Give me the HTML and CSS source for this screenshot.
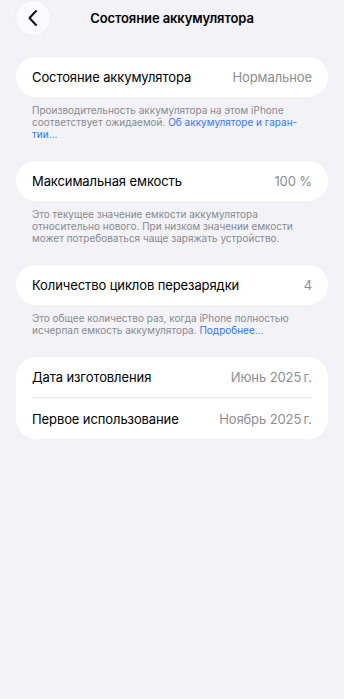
FILE: index.html
```html
<!DOCTYPE html>
<html lang="ru">
<head>
<meta charset="utf-8">
<link rel="stylesheet" href="styles.css">
</head>
<body>
<div class="page">
  <header class="header">
    <div class="back">
      <svg width="14" height="18" viewBox="0 0 14 18"><path d="M10 2 L3.5 9 L10 16" fill="none" stroke="#111" stroke-width="2" stroke-linecap="round" stroke-linejoin="round"/></svg>
    </div>
    <div class="title">Состояние аккумулятора</div>
  </header>

  <section class="section first">
    <div class="card">
      <div class="row"><span class="label">Состояние аккумулятора</span><span class="value">Нормальное</span></div>
    </div>
    <p class="note">Производительность аккумулятора на этом iPhone<br>соответствует ожидаемой. <span class="link">Об аккумуляторе и гаран-<br>тии…</span></p>
  </section>

  <section class="section">
    <div class="card">
      <div class="row"><span class="label">Максимальная емкость</span><span class="value">100 %</span></div>
    </div>
    <p class="note">Это текущее значение емкости аккумулятора<br>относительно нового. При низком значении емкости<br>может потребоваться чаще заряжать устройство.</p>
  </section>

  <section class="section">
    <div class="card">
      <div class="row"><span class="label">Количество циклов перезарядки</span><span class="value">4</span></div>
    </div>
    <p class="note">Это общее количество раз, когда iPhone полностью<br>исчерпал емкость аккумулятора. <span class="link">Подробнее…</span></p>
  </section>

  <section class="section">
    <div class="card">
      <div class="row"><span class="label">Дата изготовления</span><span class="value">Июнь 2025&#8239;г.</span></div>
      <div class="sep"></div>
      <div class="row"><span class="label">Первое использование</span><span class="value">Ноябрь 2025&#8239;г.</span></div>
    </div>
  </section>
</div>
</body>
</html>
```
FILE: styles.css
```css
html, body {
  margin: 0;
  padding: 0;
  background: #f2f2f7;
}
body {
  font-family: Inter, "Noto Sans", "Liberation Sans", sans-serif;
  color: #000;
  width: 344px;
  height: 699px;
  overflow: hidden;
}
.page {
  padding: 1px 16px 0;
}
.header {
  display: flex;
  align-items: center;
  height: 34px;
}
.back {
  width: 34px;
  height: 34px;
  border-radius: 50%;
  background: #fbfbfd;
  display: flex;
  align-items: center;
  justify-content: center;
  box-shadow: 0 0 3px rgba(0,0,0,0.04);
}
.title {
  flex: 1;
  text-align: center;
  font-size: 13px;
  font-weight: 600;
  margin-right: 34px;
  letter-spacing: -0.1px;
}
.section {
  margin-bottom: 21px;
}
.section.first {
  margin-top: 22px;
}
.card {
  background: #fff;
  border-radius: 20px;
  padding: 0 16px;
}
.row {
  height: 40px;
  display: flex;
  align-items: center;
  justify-content: space-between;
  font-size: 13px;
  letter-spacing: -0.1px;
}
.value {
  color: #8e8e93;
}
.sep {
  height: 1px;
  background: #e4e4e8;
}
.card .row + .sep + .row {
  height: 41px;
}
.note {
  margin: 0;
  padding: 7px 16px 0;
  font-size: 10px;
  line-height: 12px;
  color: #8a8a8e;
}
.link {
  color: #3478f6;
}
```
